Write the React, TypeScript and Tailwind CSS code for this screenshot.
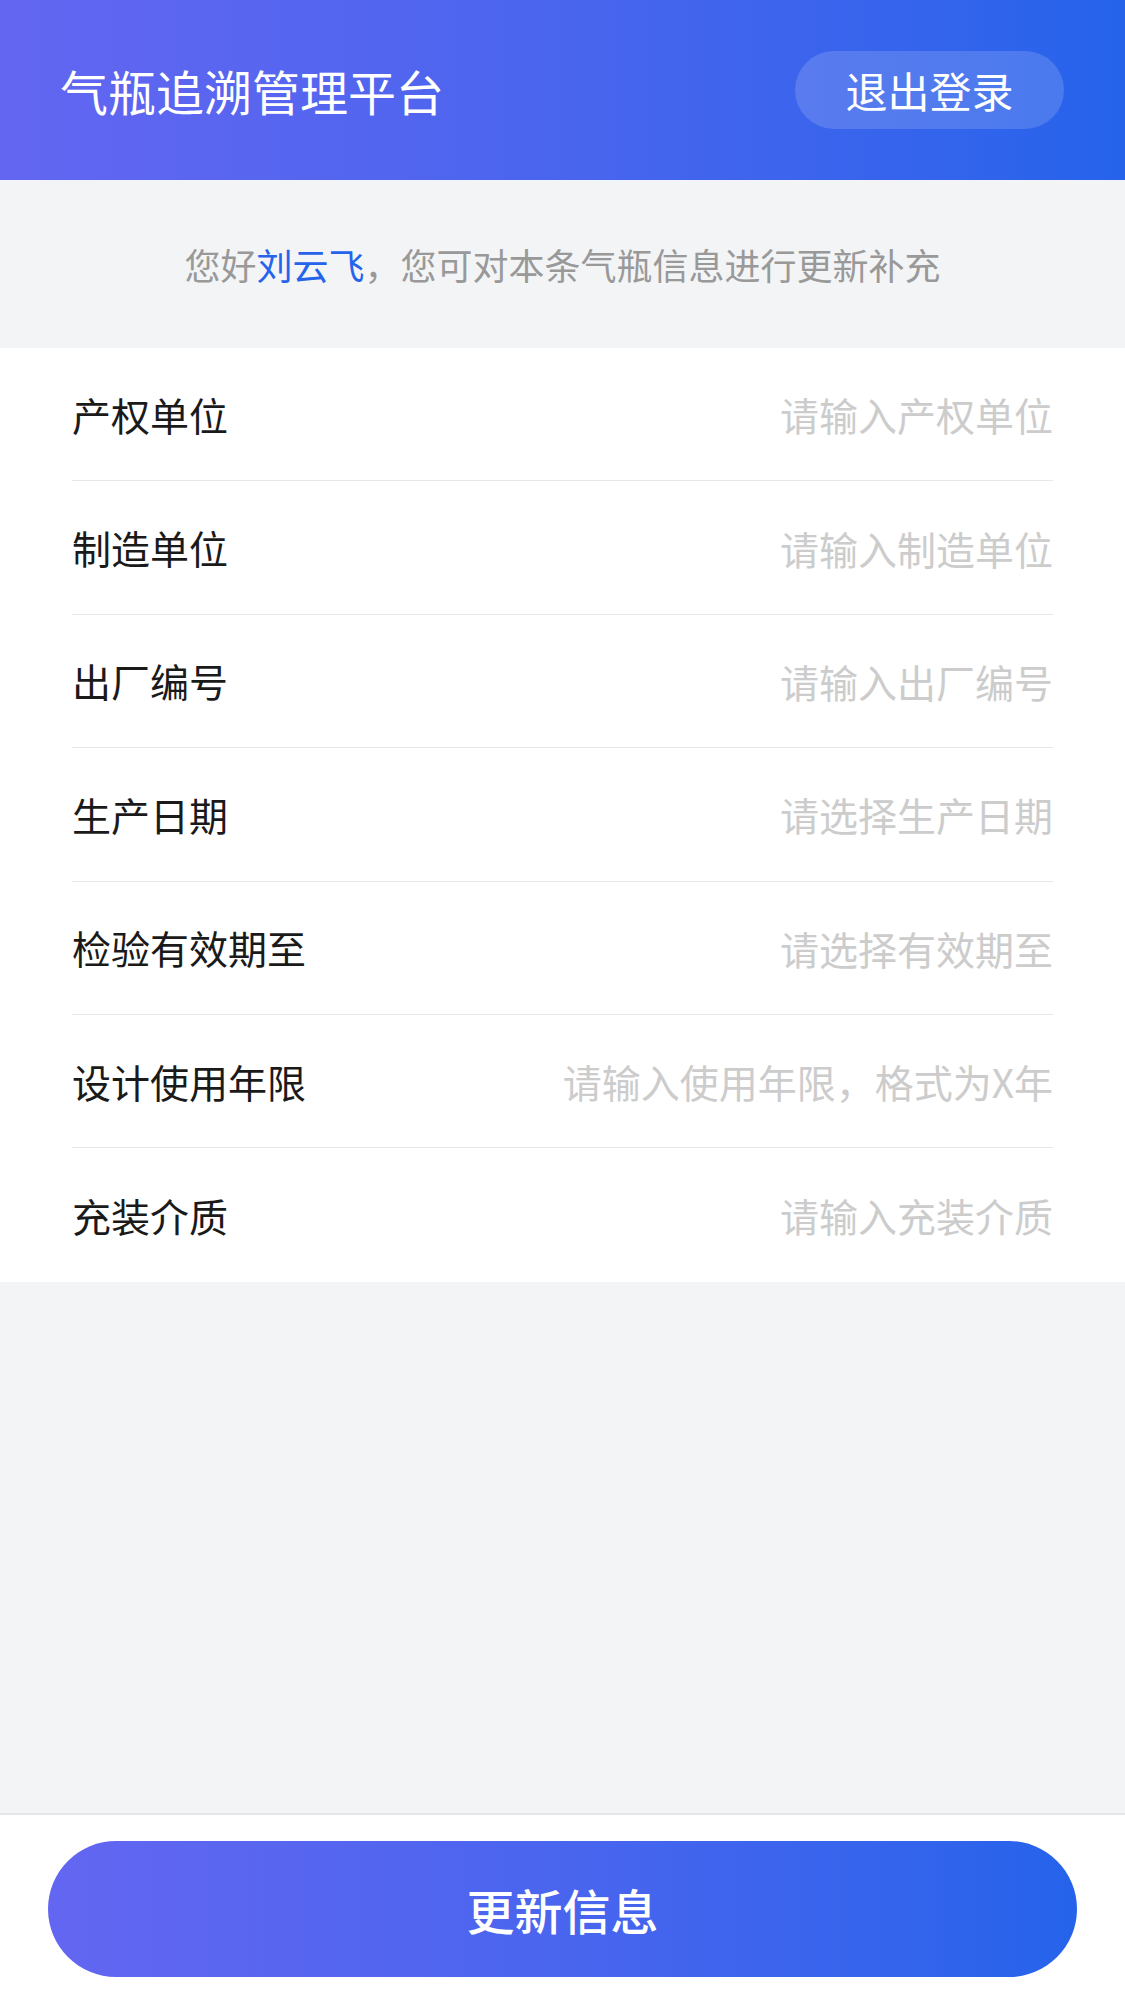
const fields = [
  { label: "产权单位", placeholder: "请输入产权单位" },
  { label: "制造单位", placeholder: "请输入制造单位" },
  { label: "出厂编号", placeholder: "请输入出厂编号" },
  { label: "生产日期", placeholder: "请选择生产日期" },
  { label: "检验有效期至", placeholder: "请选择有效期至" },
  { label: "设计使用年限", placeholder: "请输入使用年限，格式为X年" },
  { label: "充装介质", placeholder: "请输入充装介质" },
];

export default function App() {
  return (
    <div
      className="flex h-[2001px] flex-col bg-[#f3f4f6]"
      style={{ fontFamily: '"Noto Sans CJK SC", "Noto Sans", sans-serif' }}
    >
      {/* Header */}
      <header className="flex h-[180px] shrink-0 items-center justify-between bg-gradient-to-r from-[#6366f1] to-[#2563eb] pl-[60px] pr-[61px]">
        <h1 className="text-[48px] font-normal leading-none text-white">气瓶追溯管理平台</h1>
        <button className="flex h-[78px] w-[269px] items-center justify-center rounded-full bg-white/15 text-[42px] leading-none text-white">
          退出登录
        </button>
      </header>

      {/* Greeting */}
      <div className="flex h-[168px] shrink-0 items-center justify-center text-[36px] leading-none text-[#999999]">
        <p>
          您好<span className="text-[#2563eb]">刘云飞</span>，您可对本条气瓶信息进行更新补充
        </p>
      </div>

      {/* Form */}
      <div className="shrink-0 bg-white px-[72px]">
        {fields.map((f, i) => (
          <div
            key={f.label}
            className={`flex h-[133.4px] items-center justify-between ${
              i < fields.length - 1 ? "border-b-[1.5px] border-[#e5e7eb]" : ""
            }`}
          >
            <span className="text-[39px] leading-none text-[#1a1a1a]">{f.label}</span>
            <input
              readOnly
              placeholder={f.placeholder}
              className="w-[640px] bg-transparent text-right text-[39px] leading-none text-[#1a1a1a] outline-none placeholder:text-[#cccccc]"
            />
          </div>
        ))}
      </div>

      <div className="flex-1" />

      {/* Bottom bar */}
      <div className="flex h-[188px] shrink-0 items-start border-t-2 border-[#e5e7eb] bg-white px-[48px] pt-[26px]">
        <button className="flex h-[136px] w-full items-center justify-center rounded-full bg-gradient-to-r from-[#6366f1] to-[#2563eb] text-[48px] font-medium leading-none text-white">
          更新信息
        </button>
      </div>
    </div>
  );
}
